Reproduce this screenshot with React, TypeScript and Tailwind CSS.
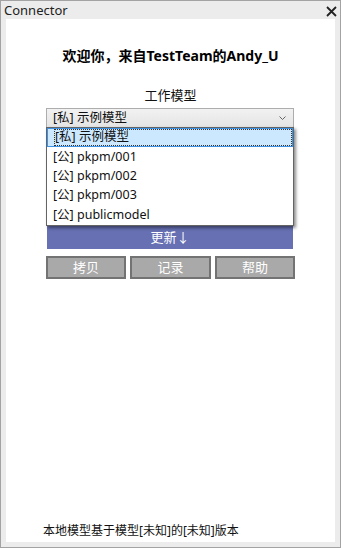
import React from "react";

const font = { fontFamily: '"Segoe UI", "Noto Sans", "Noto Sans CJK SC", sans-serif' };

export default function App() {
  const items = ["[私] 示例模型", "[公] pkpm/001", "[公] pkpm/002", "[公] pkpm/003", "[公] publicmodel"];
  return (
    <div
      className="w-[341px] h-[548px] border border-[#a3a3a3] bg-[#ececec] flex flex-col text-[#111]"
      style={font}
    >
      <div className="h-[18px] flex items-center justify-between pl-[3px] pr-[3px]">
        <span className="text-[13px] leading-[18px] text-[#222]">Connector</span>
        <svg width="11" height="11" viewBox="0 0 11 11" className="mt-[2px]">
          <path d="M1 1 L10 10 M10 1 L1 10" stroke="#222" strokeWidth="1.8" />
        </svg>
      </div>
      <div className="flex-1 mx-[5px] mb-[5px] bg-white flex flex-col">
        <div className="mt-[27px] text-center text-[14px] leading-[20px] font-bold text-black">
          欢迎你，来自TestTeam的Andy_U
        </div>
        <div className="mt-[20px] text-center text-[13px] leading-[18px] text-[#111]">工作模型</div>
        <div className="relative mt-[4px] ml-[40px] w-[248px]">
          <div className="h-[20px] border border-[#adadad] bg-gradient-to-b from-[#f2f2f2] to-[#e4e4e4] flex items-center justify-between pl-[6px] pr-[7px]">
            <span className="text-[12.5px] leading-[18px] text-[#111]">[私] 示例模型</span>
            <svg width="7" height="5" viewBox="0 0 7 5">
              <path d="M0.5 0.5 L3.5 3.5 L6.5 0.5" stroke="#666" strokeWidth="1" fill="none" />
            </svg>
          </div>
          <div className="absolute left-0 top-[19px] w-[248px] h-[99px] border border-[#646464] bg-white shadow-[2px_2px_3px_rgba(0,0,0,0.45)] z-10">
            {items.map((t, i) => (
              <div
                key={t}
                className={
                  "h-[19.4px] flex items-center text-[12.5px] pl-[6px] " +
                  (i === 0 ? "bg-[#cce8ff] border border-[#3e92e3] pl-[5px]" : "")
                }
              >
                {i === 0 ? (
                  <span className="border border-dotted border-[#333] w-full h-full flex items-center">
                    <span>{t}</span>
                  </span>
                ) : (
                  <span>{t}</span>
                )}
              </div>
            ))}
          </div>
        </div>
        <div className="mt-[98px] ml-[41px] w-[246px] h-[23px] bg-[#6670b3] text-white text-[13px] flex items-center justify-center">
          更新↓
        </div>
        <div className="mt-[7px] ml-[40px] flex gap-[4px]">
          <div className="w-[80px] h-[23px] bg-[#a9a9a9] border-2 border-[#737373] text-white text-[13px] flex items-center justify-center">拷贝</div>
          <div className="w-[81px] h-[23px] bg-[#a9a9a9] border-2 border-[#737373] text-white text-[13px] flex items-center justify-center">记录</div>
          <div className="w-[80px] h-[23px] bg-[#a9a9a9] border-2 border-[#737373] text-white text-[13px] flex items-center justify-center">帮助</div>
        </div>
        <div className="mt-auto mb-[3px] ml-[37px] text-[12px] leading-[16px] text-[#111]">
          本地模型基于模型[未知]的[未知]版本
        </div>
      </div>
    </div>
  );
}
